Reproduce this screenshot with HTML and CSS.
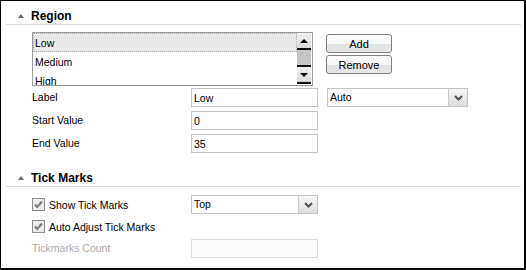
FILE: index.html
```html
<!DOCTYPE html>
<html lang="en">
<head>
  <meta charset="UTF-8" />
  <title>Region settings</title>
  <link rel="stylesheet" href="styles.css">
</head>
<body>
  <div class="panel">

    <!-- Region -->
    <div class="sec-head"><span class="caret"></span>Region</div>
    <div class="region">
      <div class="list-row">
        <div class="listbox">
          <ul class="items">
            <li class="sel">Low</li>
            <li>Medium</li>
            <li>High</li>
          </ul>
          <div class="scroll">
            <div class="sb-btn"><span class="tri up"></span></div>
            <div class="sb-thumb"></div>
            <div class="sb-btn"><span class="tri down"></span></div>
          </div>
        </div>
        <div class="btns">
          <button class="btn">Add</button>
          <button class="btn">Remove</button>
        </div>
      </div>

      <div class="form">
        <span class="lbl">Label</span>
        <input class="txt" type="text" value="Low">
        <div class="select"><span class="val">Auto</span><span class="drop"><svg width="9" height="6" viewBox="0 0 9 6"><polyline points="1,1 4.5,4.5 8,1" fill="none" stroke="#555" stroke-width="2"/></svg></span></div>

        <span class="lbl">Start Value</span>
        <input class="txt" type="text" value="0">
        <span></span>

        <span class="lbl">End Value</span>
        <input class="txt" type="text" value="35">
        <span></span>
      </div>
    </div>

    <!-- Tick Marks -->
    <div class="sec-head next"><span class="caret"></span>Tick Marks</div>
    <div class="form ticks">
      <span class="check"><svg width="13" height="13" viewBox="0 0 13 13"><rect x="0.5" y="0.5" width="12" height="12" fill="#ececec" stroke="#8f8f8f"/><polyline points="3,6.5 5.3,9 10,3.5" fill="none" stroke="#7c7c7c" stroke-width="2"/></svg>Show Tick Marks</span>
      <div class="select"><span class="val">Top</span><span class="drop"><svg width="9" height="6" viewBox="0 0 9 6"><polyline points="1,1 4.5,4.5 8,1" fill="none" stroke="#555" stroke-width="2"/></svg></span></div>
      <span></span>

      <span class="check"><svg width="13" height="13" viewBox="0 0 13 13"><rect x="0.5" y="0.5" width="12" height="12" fill="#ececec" stroke="#8f8f8f"/><polyline points="3,6.5 5.3,9 10,3.5" fill="none" stroke="#7c7c7c" stroke-width="2"/></svg>Auto Adjust Tick Marks</span>
      <span></span>
      <span></span>

      <span class="lbl off">Tickmarks Count</span>
      <input class="txt off" type="text" disabled>
      <span></span>
    </div>

  </div>
</body>
</html>
```

FILE: styles.css
```css
body { margin: 0; font-family: "Liberation Sans", Arial, sans-serif; font-size: 10.5px; color: #000; background: #fff; }
.panel { width: 526px; height: 270px; box-sizing: border-box; border-style: solid; border-color: #000; border-width: 1px 2px 2px 1px; overflow: hidden; }

.sec-head { display: flex; align-items: flex-end; height: 14px; padding: 8px 0 1px 12px; margin: 0 3px 0 5px; border-bottom: 1px solid #dcdcdc; font-size: 12px; font-weight: bold; line-height: 14px; }
.sec-head.next { margin-top: 10px; }
.caret { width: 0; height: 0; border-left: 3px solid transparent; border-right: 3px solid transparent; border-bottom: 4px solid #6a6a6a; margin: 0 7px 5px 0; }

.region { padding: 7px 0 0 31px; }
.list-row { display: flex; align-items: flex-start; }
.listbox { display: flex; width: 281px; height: 54px; box-sizing: border-box; border: 1px solid #9c9c9c; background: #fff; overflow: hidden; }
.items { flex: 1; list-style: none; margin: 0; padding: 0; }
.items li { height: 19px; line-height: 18px; padding-left: 1px; box-sizing: border-box; border: 1px solid transparent; }
.items li.sel { background: #e8e8e8; border: 1px dotted #a8a8a8; }
.scroll { display: flex; flex-direction: column; width: 14px; margin-right: 1px; }
.sb-btn { height: 15px; display: flex; align-items: center; justify-content: center; background: linear-gradient(#f2f2f2, #dadada); border-bottom: 2px solid #111; }
.sb-thumb { height: 15px; background: #c4c4c4; border-bottom: 2px solid #111; }
.tri { width: 0; height: 0; border-left: 4px solid transparent; border-right: 4px solid transparent; }
.tri.up { border-bottom: 4px solid #000; }
.tri.down { border-top: 4px solid #000; }

.btns { display: flex; flex-direction: column; gap: 2px; margin: 2px 0 0 13px; }
.btn { width: 66px; height: 19px; padding: 0; font: inherit; font-size: 11px; color: #000; border: 1px solid #7e7e7e; border-radius: 3px; background: linear-gradient(#fdfdfd 0%, #f6f6f6 50%, #e2e2e2 51%, #e6e6e6 100%); }

.form { display: grid; grid-template-columns: 150px 127px 141px; column-gap: 9px; row-gap: 4px; grid-auto-rows: 19px; align-items: center; margin-top: 2px; }
.form > * { margin: 0; }
.lbl { line-height: 19px; }
.txt { height: 19px; box-sizing: border-box; border: 1px solid #c4c4c4; padding: 0 2px; font: inherit; color: #000; background: #fff; }
.txt.off { border-color: #dcdcdc; background: #fcfcfc; }
.lbl.off { color: #ababab; }

.select { display: flex; height: 19px; box-sizing: border-box; border: 1px solid #c4c4c4; background: #fff; }
.select .val { flex: 1; padding-left: 2px; line-height: 17px; }
.select .drop { width: 18px; display: flex; align-items: center; justify-content: center; border-left: 1px solid #c8c8c8; background: linear-gradient(#f6f6f6, #dedede); }

.ticks { margin: 8px 0 0 31px; row-gap: 3px; }
.check { display: flex; align-items: center; gap: 4px; white-space: nowrap; }
.check svg { flex: none; }
```
